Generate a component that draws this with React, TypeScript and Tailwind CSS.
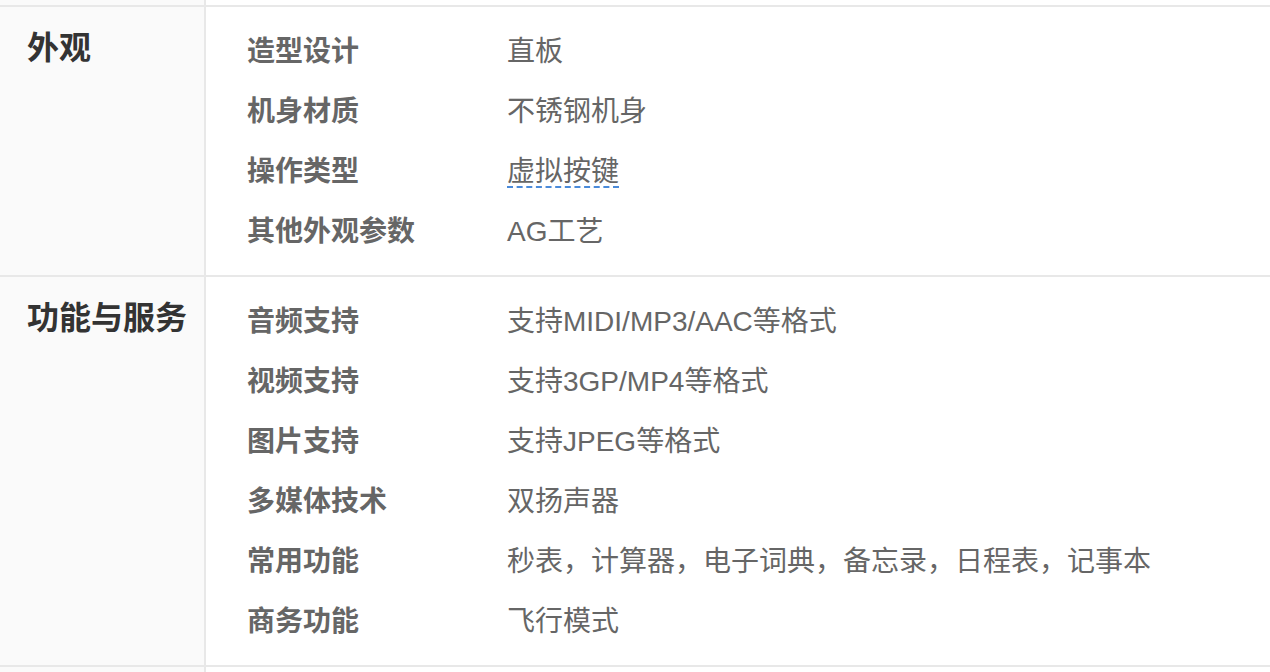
import React from "react";

type Spec = { label: string; value: string; link?: boolean };

const sections: { title: string; specs: Spec[] }[] = [
  {
    title: "外观",
    specs: [
      { label: "造型设计", value: "直板" },
      { label: "机身材质", value: "不锈钢机身" },
      { label: "操作类型", value: "虚拟按键", link: true },
      { label: "其他外观参数", value: "AG工艺" },
    ],
  },
  {
    title: "功能与服务",
    specs: [
      { label: "音频支持", value: "支持MIDI/MP3/AAC等格式" },
      { label: "视频支持", value: "支持3GP/MP4等格式" },
      { label: "图片支持", value: "支持JPEG等格式" },
      { label: "多媒体技术", value: "双扬声器" },
      { label: "常用功能", value: "秒表，计算器，电子词典，备忘录，日程表，记事本" },
      { label: "商务功能", value: "飞行模式" },
    ],
  },
];

const App = () => {
  return (
    <div
      className="w-full min-h-screen bg-white"
      style={{ fontFamily: '"Liberation Sans", "Noto Sans CJK SC", sans-serif' }}
    >
      {/* tail of the previous section */}
      <div className="flex h-[5px]">
        <div className="w-[206px] shrink-0 bg-[#fafafa] border-r-2 border-[#e8e8e8]" />
        <div className="flex-1" />
      </div>

      {sections.map((section) => (
        <div key={section.title} className="flex border-t-2 border-[#e8e8e8]">
          <div className="w-[206px] shrink-0 bg-[#fafafa] border-r-2 border-[#e8e8e8] pl-[27px] pt-[14px]">
            <div className="text-[32px] leading-[54px] font-bold text-[#333]">{section.title}</div>
          </div>
          <div className="flex-1 pl-[41px] pt-[15px] pb-[13px]">
            {section.specs.map((spec) => (
              <div key={spec.label} className="flex text-[28px] leading-[60px] text-[#666]">
                <div className="w-[260px] shrink-0 font-bold">{spec.label}</div>
                <div>
                  {spec.link ? (
                    <span className="underline decoration-dashed decoration-[#4a8ad9] decoration-2 underline-offset-[5px]">
                      {spec.value}
                    </span>
                  ) : (
                    spec.value
                  )}
                </div>
              </div>
            ))}
          </div>
        </div>
      ))}

      <div className="flex h-[10px] border-t-2 border-[#e8e8e8]">
        <div className="w-[206px] shrink-0 bg-[#fafafa] border-r-2 border-[#e8e8e8]" />
        <div className="flex-1" />
      </div>
    </div>
  );
};

export default App;
